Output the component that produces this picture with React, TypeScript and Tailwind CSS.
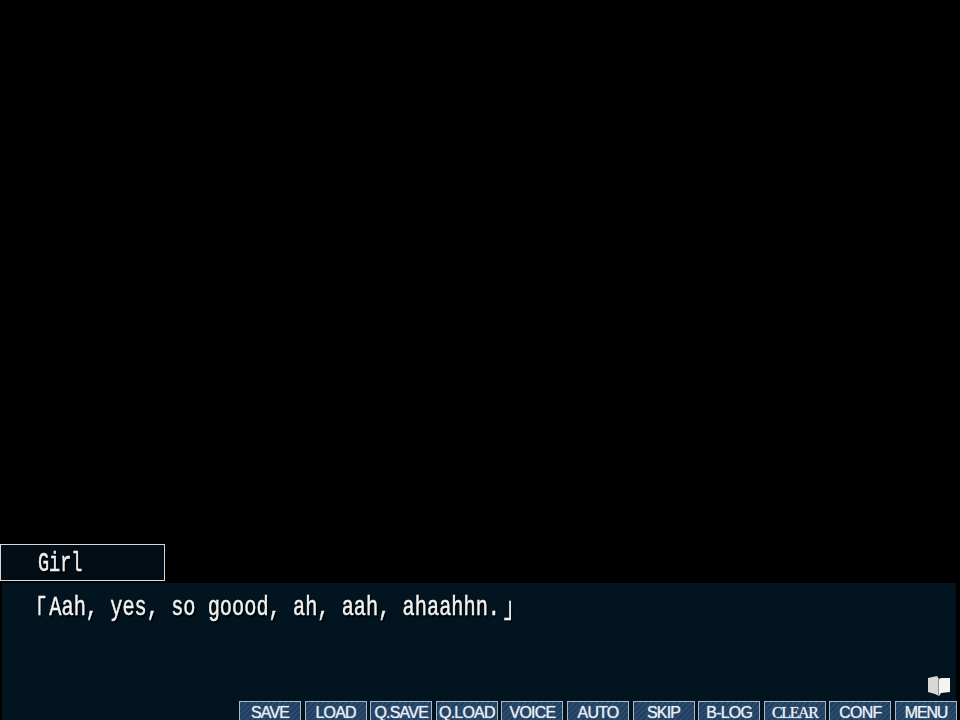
const labels = ["SAVE", "LOAD", "Q.SAVE", "Q.LOAD", "VOICE", "AUTO", "SKIP", "B-LOG", "CLEAR", "CONF", "MENU"];

function Book() {
  return (
    <svg width="24" height="22" viewBox="0 0 24 22" className="block">
      <path d="M1 3 L10 1 L12 4 L12 21 L8 19 L1 17 Z" fill="#d8d8d4" />
      <path d="M12 4 L14 3 L23 3 L23 17 L14 18 L12 21 Z" fill="#f4f4f0" />
      <path d="M11.5 4 L11.5 21" stroke="#8a9094" strokeWidth="1" />
    </svg>
  );
}

export default function App() {
  return (
    <div className="w-[960px] h-[720px] bg-black overflow-hidden flex flex-col justify-end font-['Liberation_Sans',sans-serif]">
      <div className="w-[165px] h-[37px] mb-[2px] border border-[#d8d8d8] bg-[#020d16] pl-[37px] pt-[2px] flex items-center">
        <span className="inline-block origin-left scale-x-[0.66] whitespace-pre text-[28px] text-[#f0f0f0] font-['Liberation_Mono',monospace] leading-none [-webkit-text-stroke:0.5px_#f0f0f0] [text-shadow:2px_2px_1px_#000] blur-[0.3px]">Girl</span>
      </div>
      <div className="ml-[2px] mr-[4px] h-[137px] bg-[#02141f] flex flex-col">
        <div className="pl-[27px] pt-[10px] h-[92px]">
          <span className="inline-block origin-left scale-x-[0.725] whitespace-pre text-[28px] leading-[30px] text-[#f2f2f2] font-['Liberation_Mono','Noto_Sans_CJK_JP',monospace] [-webkit-text-stroke:0.5px_#f2f2f2] [text-shadow:2px_2px_1px_#000] blur-[0.3px]">
            <span className="inline-block translate-y-[6px] -translate-x-[5px]">「</span>Aah, yes, so goood, ah, aah, ahaahhn.<span className="inline-block translate-y-[2px] translate-x-[5px]">」</span>
          </span>
        </div>
        <div className="flex justify-end pr-[5px] h-[26px]">
          <Book />
        </div>
        <div className="flex justify-end gap-[3.6px] -mr-[1px] h-[19px]">
          {labels.map((l) => (
            <div
              key={l}
              className={`w-[62px] h-[24px] shrink-0 border border-[#a8b8c4] bg-[#234363] bg-[repeating-linear-gradient(135deg,#2a4b6d_0px,#2a4b6d_2px,#203f5e_2px,#203f5e_4px)] text-[#e8eef4] text-center leading-[22px] [text-shadow:0_0_1px_#c8d4e0] ${l === "CLEAR" ? "font-['Liberation_Serif',serif] text-[16px] tracking-[-1.4px]" : l === "MENU" ? "text-[16px] tracking-[-1.2px]" : "text-[16px] tracking-[-0.8px]"}`}
            >
              {l}
            </div>
          ))}
        </div>
      </div>
    </div>
  );
}
